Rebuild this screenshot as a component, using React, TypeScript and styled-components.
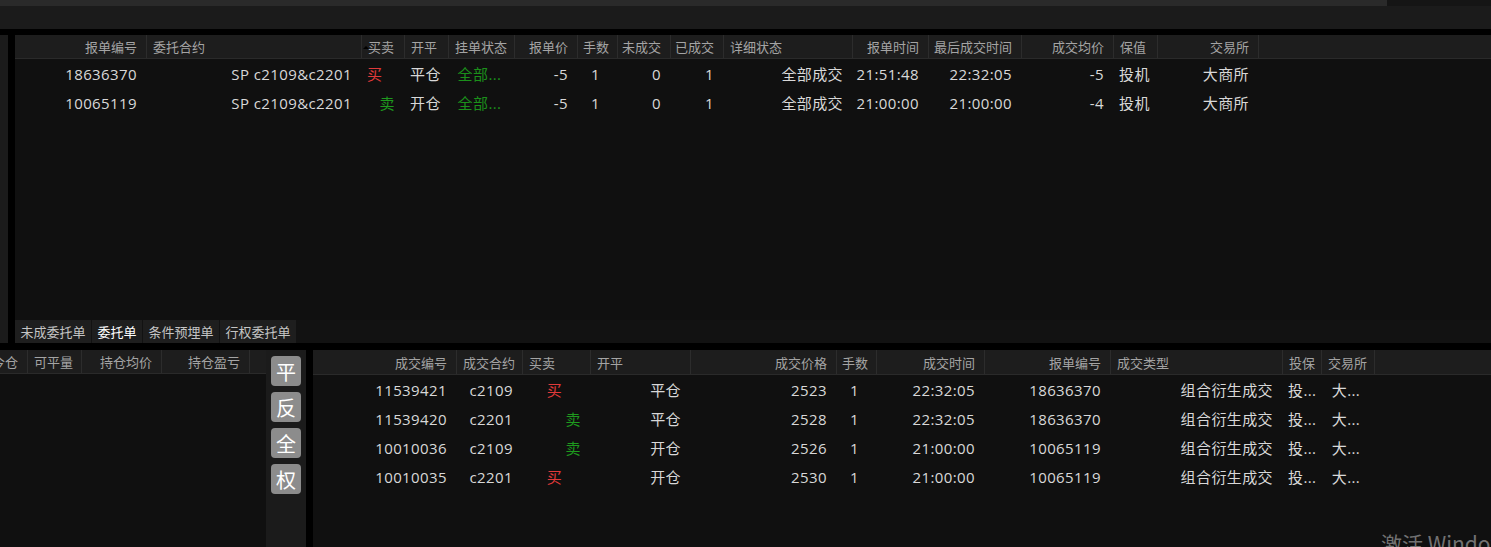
import React from 'react';
import styled, { createGlobalStyle } from 'styled-components';

type Align = 'left' | 'center' | 'right';
type Tone = 'buy' | 'sell' | 'ok';

interface Column {
    readonly title: string;
    readonly width: number;
    readonly head: Align;
    readonly body: Align;
    readonly sort?: boolean;
}

interface CellData {
    readonly text: string;
    readonly tone?: Tone;
    readonly align?: Align;
}

type Value = string | CellData;

const GlobalStyle = createGlobalStyle`
    html, body {
        margin: 0;
        padding: 0;
        background: #000;
    }
    body {
        font-family: "Open Sans", "Noto Sans CJK SC", sans-serif;
        color: #d6d6d6;
        -webkit-font-smoothing: antialiased;
    }
`;

const justify = (a: Align) => (a === 'left' ? 'flex-start' : a === 'right' ? 'flex-end' : 'center');

const toneColor: { readonly [key in Tone]: string } = {
    buy: '#e03a3a',
    sell: '#1e9a1e',
    ok: '#1b901b',
};

const Page = styled.div`
    position: relative;
    width: 1491px;
    height: 547px;
    display: flex;
    flex-direction: column;
    background: #000;
    overflow: hidden;
`;

const TitleBar = styled.div`
    height: 6px;
    display: flex;
    background: #151515;
`;

const ScrollThumb = styled.div`
    width: 1387px;
    background: #2a2a2a;
`;

const Toolbar = styled.div`
    height: 23px;
    background: #1b1b1b;
    margin-bottom: 6px;
`;

const Upper = styled.div`
    height: 308px;
    display: flex;
    gap: 7px;
`;

const SideStrip = styled.div`
    width: 8px;
    background: #1b1b1b;
`;

const Panel = styled.div`
    flex: 1;
    min-width: 0;
    display: flex;
    flex-direction: column;
    background: #101010;
    overflow: hidden;
`;

const HeaderRow = styled.div<{ $h: number }>`
    display: flex;
    height: ${p => p.$h}px;
    flex-shrink: 0;
    background: #1d1d1d;
    border-bottom: 1px solid #2a2a2a;
    font-family: "Noto Sans CJK SC", sans-serif;
    font-size: 13px;
    color: #a4a4a4;
`;

const HeaderCell = styled.div<{ $w: number; $align: Align }>`
    position: relative;
    box-sizing: border-box;
    width: ${p => p.$w}px;
    flex-shrink: 0;
    display: flex;
    align-items: center;
    justify-content: ${p => justify(p.$align)};
    padding: 0 9px 0 6px;
    border-right: 1px solid #2c2c2c;
    white-space: nowrap;
    overflow: hidden;
`;

const SortMark = styled.span`
    position: absolute;
    left: 1px;
    top: 11px;
    width: 0;
    height: 0;
    border-left: 3px solid transparent;
    border-right: 3px solid transparent;
    border-bottom: 3px solid #000;
`;

const Body = styled.div`
    flex: 1;
`;

const Row = styled.div`
    display: flex;
    height: 29px;
    font-size: 15px;
    letter-spacing: 0.4px;
`;

const Cell = styled.div<{ $w: number; $align: Align; $tone?: Tone }>`
    box-sizing: border-box;
    width: ${p => p.$w}px;
    flex-shrink: 0;
    display: flex;
    align-items: center;
    justify-content: ${p => justify(p.$align)};
    padding: 0 10px 0 5px;
    white-space: nowrap;
    overflow: hidden;
    color: ${p => (p.$tone ? toneColor[p.$tone] : '#d8d8d8')};
`;

const TabStrip = styled.div`
    height: 23px;
    flex-shrink: 0;
    display: flex;
    gap: 1px;
    background: #121212;
`;

const Tab = styled.div<{ $active?: boolean }>`
    display: flex;
    align-items: center;
    padding: 0 5.5px;
    background: #1e1e1e;
    font-family: "Noto Sans CJK SC", sans-serif;
    font-size: 13px;
    color: ${p => (p.$active ? '#ffffff' : '#c4c4c4')};
`;

const Lower = styled.div`
    flex: 1;
    display: flex;
    gap: 7px;
    margin-top: 7px;
`;

const PositionPanel = styled.div`
    width: 306px;
    flex-shrink: 0;
    display: flex;
    background: #101010;
`;

const ActionColumn = styled.div`
    width: 40px;
    flex-shrink: 0;
    display: flex;
    flex-direction: column;
    align-items: center;
    gap: 6px;
    padding-top: 6px;
    background: #1b1b1b;
`;

const ActionButton = styled.div`
    width: 30px;
    height: 30px;
    border-radius: 4px;
    background: #8c8c8c;
    display: flex;
    align-items: center;
    justify-content: center;
    font-family: "Noto Sans CJK SC", sans-serif;
    font-size: 20px;
    color: #fff;
`;

const Watermark = styled.div`
    position: absolute;
    left: 1381px;
    top: 530px;
    font-family: "Noto Sans CJK SC", sans-serif;
    font-size: 21px;
    line-height: 26px;
    color: rgba(200, 200, 200, 0.55);
    white-space: nowrap;
`;

const orderCols: readonly Column[] = [
    { title: '报单编号', width: 132, head: 'right', body: 'right' },
    { title: '委托合约', width: 215, head: 'left', body: 'right' },
    { title: '买卖', width: 43, head: 'left', body: 'left', sort: true },
    { title: '开平', width: 44, head: 'left', body: 'left' },
    { title: '挂单状态', width: 66, head: 'left', body: 'center' },
    { title: '报单价', width: 63, head: 'right', body: 'right' },
    { title: '手数', width: 40, head: 'center', body: 'center' },
    { title: '未成交', width: 53, head: 'right', body: 'right' },
    { title: '已成交', width: 53, head: 'right', body: 'right' },
    { title: '详细状态', width: 129, head: 'left', body: 'right' },
    { title: '报单时间', width: 76, head: 'right', body: 'right' },
    { title: '最后成交时间', width: 93, head: 'right', body: 'right' },
    { title: '成交均价', width: 92, head: 'right', body: 'right' },
    { title: '保值', width: 44, head: 'left', body: 'left' },
    { title: '交易所', width: 101, head: 'right', body: 'right' },
];

const orders: readonly (readonly Value[])[] = [
    ['18636370', 'SP c2109&c2201', { text: '买', tone: 'buy' }, '平仓', { text: '全部...', tone: 'ok' }, '-5', '1', '0', '1', '全部成交', '21:51:48', '22:32:05', '-5', '投机', '大商所'],
    ['10065119', 'SP c2109&c2201', { text: '卖', tone: 'sell', align: 'right' }, '开仓', { text: '全部...', tone: 'ok' }, '-5', '1', '0', '1', '全部成交', '21:00:00', '21:00:00', '-4', '投机', '大商所'],
];

const positionCols: readonly Column[] = [
    { title: '今仓', width: 28, head: 'right', body: 'right' },
    { title: '可平量', width: 54, head: 'left', body: 'right' },
    { title: '持仓均价', width: 80, head: 'right', body: 'right' },
    { title: '持仓盈亏', width: 88, head: 'right', body: 'right' },
    { title: '', width: 60, head: 'left', body: 'left' },
];

const tradeCols: readonly Column[] = [
    { title: '成交编号', width: 144, head: 'right', body: 'right' },
    { title: '成交合约', width: 66, head: 'left', body: 'right' },
    { title: '买卖', width: 68, head: 'left', body: 'center' },
    { title: '开平', width: 100, head: 'left', body: 'right' },
    { title: '成交价格', width: 146, head: 'right', body: 'right' },
    { title: '手数', width: 40, head: 'center', body: 'center' },
    { title: '成交时间', width: 108, head: 'right', body: 'right' },
    { title: '报单编号', width: 126, head: 'right', body: 'right' },
    { title: '成交类型', width: 172, head: 'left', body: 'right' },
    { title: '投保', width: 39, head: 'left', body: 'left' },
    { title: '交易所', width: 53, head: 'left', body: 'center' },
];

const buy: CellData = { text: '买', tone: 'buy' };
const sell: CellData = { text: '卖', tone: 'sell', align: 'right' };

const trades: readonly (readonly Value[])[] = [
    ['11539421', 'c2109', buy, '平仓', '2523', '1', '22:32:05', '18636370', '组合衍生成交', '投...', '大...'],
    ['11539420', 'c2201', sell, '平仓', '2528', '1', '22:32:05', '18636370', '组合衍生成交', '投...', '大...'],
    ['10010036', 'c2109', sell, '开仓', '2526', '1', '21:00:00', '10065119', '组合衍生成交', '投...', '大...'],
    ['10010035', 'c2201', buy, '开仓', '2530', '1', '21:00:00', '10065119', '组合衍生成交', '投...', '大...'],
];

const Header = ({ cols, height }: { cols: readonly Column[]; height: number }) => (
    <HeaderRow $h={height}>
        {cols.map((c, i) => (
            <HeaderCell key={i} $w={c.width} $align={c.head}>
                {c.sort && <SortMark />}
                {c.title}
            </HeaderCell>
        ))}
    </HeaderRow>
);

const Rows = ({ cols, rows }: { cols: readonly Column[]; rows: readonly (readonly Value[])[] }) => (
    <>
        {rows.map((r, i) => (
            <Row key={i}>
                {cols.map((c, j) => {
                    const v = r[j];
                    const cell: CellData = typeof v === 'string' ? { text: v } : v;
                    return (
                        <Cell key={j} $w={c.width} $align={cell.align ?? c.body} $tone={cell.tone}>
                            {cell.text}
                        </Cell>
                    );
                })}
            </Row>
        ))}
    </>
);

export default function App() {
    return (
        <Page>
            <GlobalStyle />
            <TitleBar>
                <ScrollThumb />
            </TitleBar>
            <Toolbar />
            <Upper>
                <SideStrip />
                <Panel>
                    <Header cols={orderCols} height={23} />
                    <Body>
                        <Rows cols={orderCols} rows={orders} />
                    </Body>
                    <TabStrip>
                        <Tab>未成委托单</Tab>
                        <Tab $active>委托单</Tab>
                        <Tab>条件预埋单</Tab>
                        <Tab>行权委托单</Tab>
                    </TabStrip>
                </Panel>
            </Upper>
            <Lower>
                <PositionPanel>
                    <Panel>
                        <Header cols={positionCols} height={23} />
                        <Body />
                    </Panel>
                    <ActionColumn>
                        <ActionButton>平</ActionButton>
                        <ActionButton>反</ActionButton>
                        <ActionButton>全</ActionButton>
                        <ActionButton>权</ActionButton>
                    </ActionColumn>
                </PositionPanel>
                <Panel>
                    <Header cols={tradeCols} height={24} />
                    <Body>
                        <Rows cols={tradeCols} rows={trades} />
                    </Body>
                </Panel>
            </Lower>
            <Watermark>激活 Windows</Watermark>
        </Page>
    );
}
